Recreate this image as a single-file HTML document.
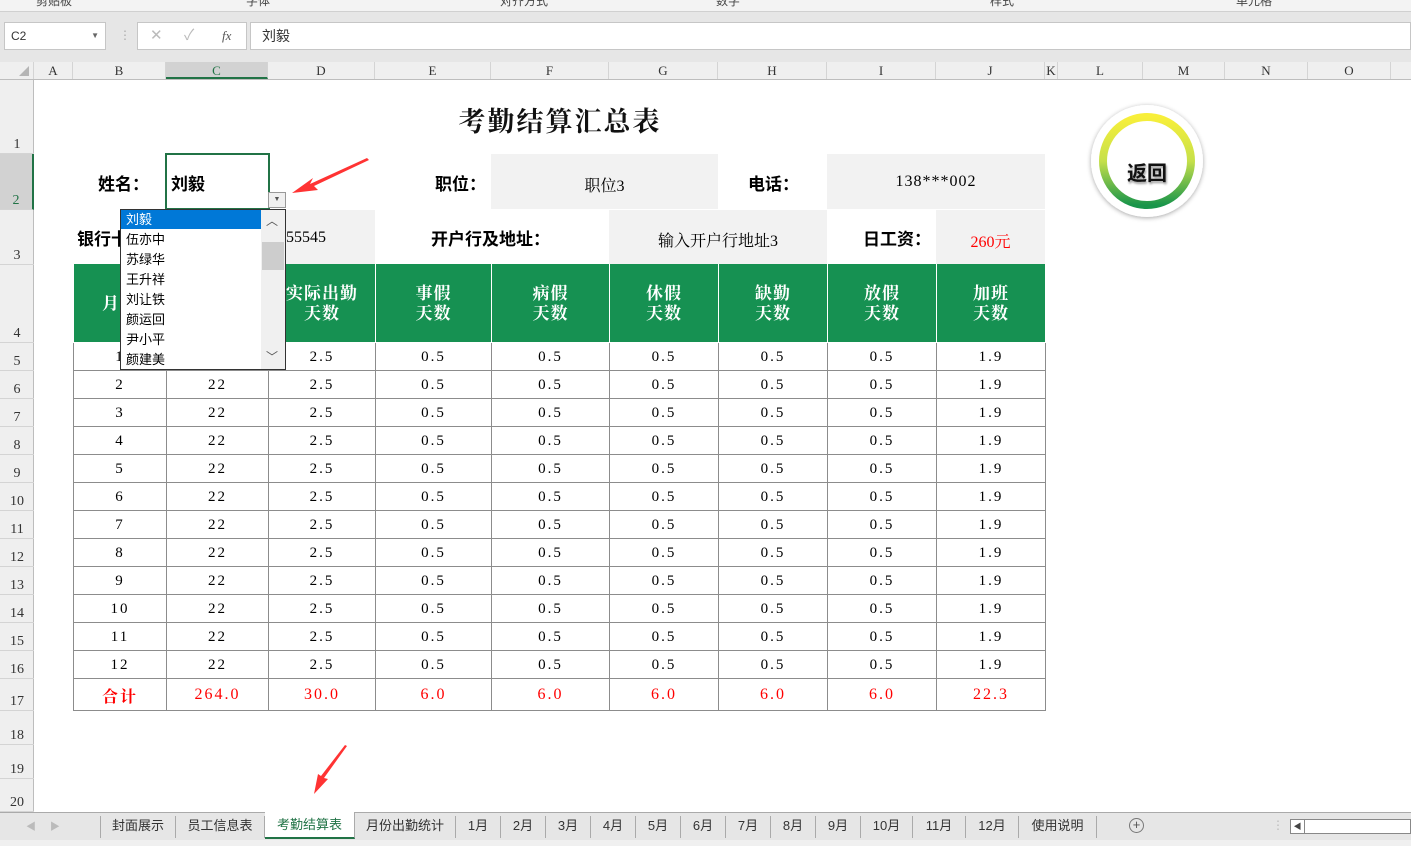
<!DOCTYPE html>
<html><head><meta charset="utf-8"><style>
*{margin:0;padding:0;box-sizing:border-box}
body{width:1411px;height:846px;overflow:hidden;background:#fff;position:relative;font-family:"Liberation Sans","Noto Sans CJK SC",sans-serif}
.a{position:absolute}
.ser{font-family:"Liberation Serif","Noto Serif CJK SC",serif}
.ch{position:absolute;top:62px;height:17px;border-right:1px solid #d4d4d4;font-size:13px;text-align:center;line-height:18px;color:#333;font-family:"Liberation Serif",serif}
.rh{position:absolute;left:0;width:34px;border-bottom:1px solid #d4d4d4;font-size:14px;color:#333;text-align:center;font-family:"Liberation Serif",serif;display:flex;align-items:flex-end;justify-content:center;line-height:16px}
table{border-collapse:collapse;position:absolute;left:73px;top:264px;table-layout:fixed}
td{border:1px solid #8c8c8c;text-align:center;font-family:"Liberation Serif","Noto Serif CJK SC",serif;font-size:15px;letter-spacing:2px;height:28px;padding:0;padding-top:2px}
tr.h td{background:#169152;color:#fff;font-size:17px;letter-spacing:1px;line-height:20px;height:78px;border-color:#fff;border-top:none;font-weight:bold}
tr.t td{color:#f00;height:32px;font-size:16px}
.tab{position:absolute;top:816px;height:22px;font-size:13px;color:#333;line-height:20px;border-right:1px solid #aaa;text-align:center}
.it{position:absolute;left:126px;font-size:13px;color:#000;line-height:20px;height:20px}
.lb{font-size:17px;font-weight:bold;font-family:"Noto Sans CJK SC",sans-serif}
</style></head><body>
<div class="a" style="left:0;top:0;width:1411px;height:12px;background:#f3f3f3;border-bottom:1px solid #d0d0d0;overflow:hidden">
<div class="a" style="left:36px;top:-8px;font-size:12px;color:#444">剪贴板</div>
<div class="a" style="left:246px;top:-8px;font-size:12px;color:#444">字体</div>
<div class="a" style="left:500px;top:-8px;font-size:12px;color:#444">对齐方式</div>
<div class="a" style="left:716px;top:-8px;font-size:12px;color:#444">数字</div>
<div class="a" style="left:990px;top:-8px;font-size:12px;color:#444">样式</div>
<div class="a" style="left:1236px;top:-8px;font-size:12px;color:#444">单元格</div>
</div>
<div class="a" style="left:0;top:12px;width:1411px;height:50px;background:#e6e6e6"></div>
<div class="a" style="left:4px;top:22px;width:102px;height:28px;background:#fff;border:1px solid #c6c6c6;font-size:12px;line-height:26px;padding-left:6px;color:#333">C2<span style="position:absolute;right:6px;top:0;font-size:8px;color:#666">▼</span></div>
<div class="a" style="left:119px;top:28px;color:#aaa;font-size:12px">⋮</div>
<div class="a" style="left:137px;top:22px;width:110px;height:28px;background:#fff;border:1px solid #c6c6c6;color:#bbb;font-size:15px;line-height:26px"><span style="position:absolute;left:12px">✕</span><span style="position:absolute;left:46px">✓</span><span style="position:absolute;left:84px;color:#555;font-family:'Liberation Serif',serif;font-style:italic;font-size:13px">fx</span></div>
<div class="a" style="left:250px;top:22px;width:1161px;height:28px;background:#fff;border:1px solid #c6c6c6;font-size:14px;line-height:26px;padding-left:11px;color:#333">刘毅</div>
<div class="a" style="left:0;top:62px;width:1411px;height:18px;background:#efefef;border-bottom:1px solid #bdbdbd"></div>
<div class="a" style="left:0;top:62px;width:34px;height:17px;border-right:1px solid #d4d4d4"><div style="position:absolute;right:4px;bottom:3px;width:0;height:0;border-left:10px solid transparent;border-bottom:10px solid #b5b5b5"></div></div>
<div class="ch" style="left:34px;width:39px">A</div>
<div class="ch" style="left:73px;width:93px">B</div>
<div class="ch" style="left:166px;width:102px;background:#d2d2d2;color:#217346;border-bottom:2px solid #217346">C</div>
<div class="ch" style="left:268px;width:107px">D</div>
<div class="ch" style="left:375px;width:116px">E</div>
<div class="ch" style="left:491px;width:118px">F</div>
<div class="ch" style="left:609px;width:109px">G</div>
<div class="ch" style="left:718px;width:109px">H</div>
<div class="ch" style="left:827px;width:109px">I</div>
<div class="ch" style="left:936px;width:109px">J</div>
<div class="ch" style="left:1045px;width:13px">K</div>
<div class="ch" style="left:1058px;width:85px">L</div>
<div class="ch" style="left:1143px;width:82px">M</div>
<div class="ch" style="left:1225px;width:83px">N</div>
<div class="ch" style="left:1308px;width:83px">O</div>
<div class="a" style="left:0;top:80px;width:34px;height:732px;background:#efefef;border-right:1px solid #bdbdbd"></div>
<div class="rh" style="top:80px;height:74px">1</div>
<div class="rh" style="top:154px;height:56px;background:#d2d2d2;color:#217346;border-right:2px solid #217346">2</div>
<div class="rh" style="top:210px;height:55px">3</div>
<div class="rh" style="top:265px;height:78px">4</div>
<div class="rh" style="top:343px;height:28px">5</div>
<div class="rh" style="top:371px;height:28px">6</div>
<div class="rh" style="top:399px;height:28px">7</div>
<div class="rh" style="top:427px;height:28px">8</div>
<div class="rh" style="top:455px;height:28px">9</div>
<div class="rh" style="top:483px;height:28px">10</div>
<div class="rh" style="top:511px;height:28px">11</div>
<div class="rh" style="top:539px;height:28px">12</div>
<div class="rh" style="top:567px;height:28px">13</div>
<div class="rh" style="top:595px;height:28px">14</div>
<div class="rh" style="top:623px;height:28px">15</div>
<div class="rh" style="top:651px;height:28px">16</div>
<div class="rh" style="top:679px;height:32px">17</div>
<div class="rh" style="top:711px;height:34px">18</div>
<div class="rh" style="top:745px;height:34px">19</div>
<div class="rh" style="top:779px;height:33px">20</div>
<div class="a ser" style="left:375px;top:100px;width:370px;text-align:center;font-size:27px;font-weight:bold;letter-spacing:2px;color:#111">考勤结算汇总表</div>
<div class="a" style="left:491px;top:154px;width:227px;height:55px;background:#f2f2f2"></div>
<div class="a" style="left:827px;top:154px;width:218px;height:55px;background:#f2f2f2"></div>
<div class="a lb" style="left:98px;top:170px">姓名：</div>
<div class="a" style="left:165px;top:153px;width:105px;height:57px;border:2px solid #217346"></div>
<div class="a lb" style="left:171px;top:170px">刘毅</div>
<div class="a" style="left:268px;top:192px;width:18px;height:16px;background:#f0f0f0;border:1px solid #999;font-size:7px;text-align:center;line-height:14px;color:#555">▼</div>
<div class="a lb" style="left:435px;top:170px">职位：</div>
<div class="a ser" style="left:491px;top:173px;width:227px;text-align:center;font-size:16px">职位3</div>
<div class="a lb" style="left:748px;top:170px">电话：</div>
<div class="a ser" style="left:827px;top:173px;width:218px;text-align:center;font-size:16px;letter-spacing:1px">138***002</div>
<div class="a" style="left:268px;top:210px;width:107px;height:54px;background:#f2f2f2"></div>
<div class="a" style="left:609px;top:210px;width:218px;height:54px;background:#f2f2f2"></div>
<div class="a" style="left:936px;top:210px;width:109px;height:54px;background:#f2f2f2"></div>
<div class="a lb" style="left:77px;top:225px">银行卡号：</div>
<div class="a ser" style="left:286px;top:229px;font-size:16px">55545</div>
<div class="a lb" style="left:431px;top:225px">开户行及地址：</div>
<div class="a ser" style="left:609px;top:228px;width:218px;text-align:center;font-size:16px">输入开户行地址3</div>
<div class="a lb" style="left:863px;top:225px">日工资：</div>
<div class="a ser" style="left:936px;top:229px;width:109px;text-align:center;font-size:16px;color:#f00">260元</div>
<table>
<colgroup><col style="width:93px"><col style="width:102px"><col style="width:107px"><col style="width:116px"><col style="width:118px"><col style="width:109px"><col style="width:109px"><col style="width:109px"><col style="width:109px"><col style="width:109px"></colgroup>
<tr class="h"><td>月份</td><td>应出勤<br>天数</td><td>实际出勤<br>天数</td><td>事假<br>天数</td><td>病假<br>天数</td><td>休假<br>天数</td><td>缺勤<br>天数</td><td>放假<br>天数</td><td>加班<br>天数</td></tr>
<tr><td>1</td><td>22</td><td>2.5</td><td>0.5</td><td>0.5</td><td>0.5</td><td>0.5</td><td>0.5</td><td>1.9</td></tr>
<tr><td>2</td><td>22</td><td>2.5</td><td>0.5</td><td>0.5</td><td>0.5</td><td>0.5</td><td>0.5</td><td>1.9</td></tr>
<tr><td>3</td><td>22</td><td>2.5</td><td>0.5</td><td>0.5</td><td>0.5</td><td>0.5</td><td>0.5</td><td>1.9</td></tr>
<tr><td>4</td><td>22</td><td>2.5</td><td>0.5</td><td>0.5</td><td>0.5</td><td>0.5</td><td>0.5</td><td>1.9</td></tr>
<tr><td>5</td><td>22</td><td>2.5</td><td>0.5</td><td>0.5</td><td>0.5</td><td>0.5</td><td>0.5</td><td>1.9</td></tr>
<tr><td>6</td><td>22</td><td>2.5</td><td>0.5</td><td>0.5</td><td>0.5</td><td>0.5</td><td>0.5</td><td>1.9</td></tr>
<tr><td>7</td><td>22</td><td>2.5</td><td>0.5</td><td>0.5</td><td>0.5</td><td>0.5</td><td>0.5</td><td>1.9</td></tr>
<tr><td>8</td><td>22</td><td>2.5</td><td>0.5</td><td>0.5</td><td>0.5</td><td>0.5</td><td>0.5</td><td>1.9</td></tr>
<tr><td>9</td><td>22</td><td>2.5</td><td>0.5</td><td>0.5</td><td>0.5</td><td>0.5</td><td>0.5</td><td>1.9</td></tr>
<tr><td>10</td><td>22</td><td>2.5</td><td>0.5</td><td>0.5</td><td>0.5</td><td>0.5</td><td>0.5</td><td>1.9</td></tr>
<tr><td>11</td><td>22</td><td>2.5</td><td>0.5</td><td>0.5</td><td>0.5</td><td>0.5</td><td>0.5</td><td>1.9</td></tr>
<tr><td>12</td><td>22</td><td>2.5</td><td>0.5</td><td>0.5</td><td>0.5</td><td>0.5</td><td>0.5</td><td>1.9</td></tr>
<tr class="t"><td style="font-weight:bold">合计</td><td>264.0</td><td>30.0</td><td>6.0</td><td>6.0</td><td>6.0</td><td>6.0</td><td>6.0</td><td>22.3</td></tr>
</table>
<div class="a" style="left:120px;top:209px;width:166px;height:161px;background:#fff;border:1px solid #333"></div>
<div class="a" style="left:121px;top:210px;width:140px;height:19px;background:#0078d7"></div>
<div class="a" style="left:261px;top:210px;width:24px;height:159px;background:#f0f0f0"></div>
<div class="a" style="left:262px;top:242px;width:22px;height:28px;background:#cdcdcd"></div>
<div class="a" style="left:266px;top:212px;font-size:12px;color:#555">︿</div>
<div class="a" style="left:266px;top:348px;font-size:12px;color:#555">﹀</div>
<div class="it" style="top:210px;color:#fff">刘毅</div>
<div class="it" style="top:230px">伍亦中</div>
<div class="it" style="top:250px">苏绿华</div>
<div class="it" style="top:270px">王升祥</div>
<div class="it" style="top:290px">刘让铁</div>
<div class="it" style="top:310px">颜运回</div>
<div class="it" style="top:330px">尹小平</div>
<div class="it" style="top:350px">颜建美</div>
<svg class="a" style="left:1085px;top:100px" width="126" height="126" viewBox="0 0 126 126">
<defs><linearGradient id="g" x1="0" y1="0" x2="0" y2="1"><stop offset="0" stop-color="#f8ef3a"/><stop offset="0.5" stop-color="#c6e04a"/><stop offset="1" stop-color="#19954a"/></linearGradient>
<filter id="s"><feDropShadow dx="0" dy="1" stdDeviation="2.5" flood-color="#000" flood-opacity="0.35"/></filter></defs>
<circle cx="62" cy="61" r="56" fill="#fff" filter="url(#s)"/>
<circle cx="62" cy="61" r="44" fill="none" stroke="url(#g)" stroke-width="8"/>
<text x="62" y="80" text-anchor="middle" font-size="20" font-weight="bold" fill="#111" font-family="Noto Sans CJK SC,sans-serif" style="filter:drop-shadow(1px 2px 1px rgba(0,0,0,.4))">返回</text>
</svg>
<svg class="a" style="left:0;top:0" width="1411" height="846">
<polygon points="367,158 310,184 313,178 292,193 318,190 314,186 369,160" fill="#f33"/>
<polygon points="347,746 324,778 328,779 314,794 318,774 321,776 345,745" fill="#f33"/>
</svg>
<div class="a" style="left:0;top:812px;width:1411px;height:28px;background:#e6e6e6;border-top:1px solid #aaa"></div>
<div class="a" style="left:26px;top:818px;font-size:10px;color:#bbb">◀&nbsp;&nbsp;&nbsp;&nbsp;&nbsp;▶</div>
<div class="a" style="left:100px;top:816px;height:22px;border-left:1px solid #aaa"></div>
<div class="tab" style="left:101px;width:75px">封面展示</div>
<div class="tab" style="left:176px;width:89px">员工信息表</div>
<div class="tab" style="left:265px;width:90px;top:812px;height:27px;background:#fff;color:#217346;border-bottom:2px solid #217346;line-height:26px">考勤结算表</div>
<div class="tab" style="left:355px;width:101px">月份出勤统计</div>
<div class="tab" style="left:456px;width:45px">1月</div>
<div class="tab" style="left:501px;width:45px">2月</div>
<div class="tab" style="left:546px;width:45px">3月</div>
<div class="tab" style="left:591px;width:45px">4月</div>
<div class="tab" style="left:636px;width:45px">5月</div>
<div class="tab" style="left:681px;width:45px">6月</div>
<div class="tab" style="left:726px;width:45px">7月</div>
<div class="tab" style="left:771px;width:45px">8月</div>
<div class="tab" style="left:816px;width:45px">9月</div>
<div class="tab" style="left:861px;width:52px">10月</div>
<div class="tab" style="left:913px;width:53px">11月</div>
<div class="tab" style="left:966px;width:53px">12月</div>
<div class="tab" style="left:1019px;width:78px">使用说明</div>
<div class="a" style="left:1129px;top:818px;width:15px;height:15px;border:1px solid #777;border-radius:50%;font-size:13px;line-height:12px;text-align:center;color:#555">+</div>
<div class="a" style="left:1272px;top:818px;color:#bbb;font-size:12px">⋮</div>
<div class="a" style="left:1290px;top:819px;width:121px;height:15px;background:#fff;border:1px solid #888"><div style="width:14px;height:13px;border-right:1px solid #888;font-size:8px;line-height:13px;text-align:center;color:#444">◀</div></div>
<div class="a" style="left:0;top:840px;width:1411px;height:6px;background:#f0f0f0"></div>
</body></html>
